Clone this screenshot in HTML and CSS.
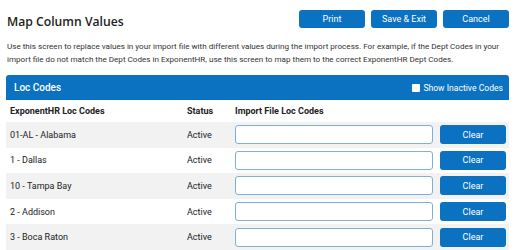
FILE: index.html
```html
<!DOCTYPE html>
<html>
<head>
<meta charset="utf-8">
<link rel="stylesheet" href="styles.css">
</head>
<body>
<div class="page">
  <div class="top">
    <h1 class="title">Map Column Values</h1>
    <div class="actions">
      <button class="btn">Print</button>
      <button class="btn">Save &amp; Exit</button>
      <button class="btn">Cancel</button>
    </div>
  </div>
  <p class="desc">Use this screen to replace values in your import file with different values during the import process. For example, if the Dept Codes in your import file do not match the Dept Codes in ExponentHR, use this screen to map them to the correct ExponentHR Dept Codes.</p>
  <div class="panel">
    <div class="panel-head">
      <span class="panel-title">Loc Codes</span>
      <label class="toggle"><span class="box"></span>Show Inactive Codes</label>
    </div>
    <div class="row head-row">
      <div class="c-name">ExponentHR Loc Codes</div>
      <div class="c-status">Status</div>
      <div class="c-import">Import File Loc Codes</div>
    </div>
    <div class="row odd">
      <div class="c-name">01-AL - Alabama</div>
      <div class="c-status">Active</div>
      <div class="c-import"><input class="field" type="text"><button class="btn clear">Clear</button></div>
    </div>
    <div class="row">
      <div class="c-name">1 - Dallas</div>
      <div class="c-status">Active</div>
      <div class="c-import"><input class="field" type="text"><button class="btn clear">Clear</button></div>
    </div>
    <div class="row odd">
      <div class="c-name">10 - Tampa Bay</div>
      <div class="c-status">Active</div>
      <div class="c-import"><input class="field" type="text"><button class="btn clear">Clear</button></div>
    </div>
    <div class="row">
      <div class="c-name">2 - Addison</div>
      <div class="c-status">Active</div>
      <div class="c-import"><input class="field" type="text"><button class="btn clear">Clear</button></div>
    </div>
    <div class="row odd">
      <div class="c-name">3 - Boca Raton</div>
      <div class="c-status">Active</div>
      <div class="c-import"><input class="field" type="text"><button class="btn clear">Clear</button></div>
    </div>
  </div>
</div>
</body>
</html>
```
FILE: styles.css
```css
* { box-sizing: border-box; }
html, body { margin: 0; padding: 0; background: #fff; }
body {
  font-family: Roboto, "Liberation Sans", sans-serif;
  color: #222;
  font-size: 9px;
  overflow: hidden;
}
.page {
  width: 516px;
  padding: 10px 7px 0 6px;
}
.top {
  display: flex;
  justify-content: space-between;
  align-items: flex-start;
  height: 30px;
}
.title {
  margin: 3px 0 0 1px;
  font-family: "Open Sans", sans-serif;
  font-weight: 600;
  font-size: 12.2px;
  line-height: 18px;
  color: #222;
}
.actions {
  display: flex;
  gap: 6px;
}
.btn {
  width: 66px;
  height: 18px;
  border: none;
  border-radius: 3px;
  background: #0a72c0;
  color: #fff;
  font-family: Roboto, sans-serif;
  font-size: 9px;
  padding: 0;
}
.desc {
  margin: 0 0 0 1px;
  font-size: 8.1px;
  line-height: 13px;
  color: #333;
}
.panel {
  margin-top: 9px;
}
.panel-head {
  height: 25px;
  background: #0a72c0;
  border-radius: 3px 3px 0 0;
  display: flex;
  align-items: center;
  justify-content: space-between;
  padding: 0 6px 0 8px;
  color: #fff;
}
.panel-title {
  font-size: 10px;
  font-weight: 500;
}
.toggle {
  display: flex;
  align-items: center;
  gap: 3px;
  font-size: 8.6px;
}
.box {
  width: 8px;
  height: 8px;
  background: #fff;
  border-radius: 1px;
}
.row {
  display: flex;
  align-items: center;
  height: 25.6px;
}
.row.odd { background: #f2f2f2; }
.head-row {
  height: 22px;
  font-weight: 700;
  color: #222;
}
.c-name { width: 181px; padding-left: 4px; }
.c-status { width: 48px; }
.c-import {
  display: flex;
  align-items: center;
  gap: 7px;
}
.field {
  width: 198px;
  height: 19px;
  border: 1px solid #7fb0d8;
  border-radius: 3px;
  background: #fff;
  margin: 0;
}
.clear { height: 19px; }
```
